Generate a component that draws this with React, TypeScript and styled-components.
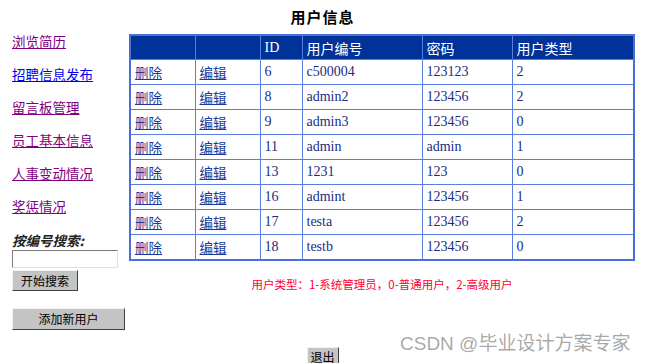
import React from "react";
import styled, { createGlobalStyle } from "styled-components";

const GlobalStyle = createGlobalStyle`
	html, body {
		margin: 0;
		padding: 0;
		background: #ffffff;
	}
	body {
		font-family: "Liberation Serif", "Noto Sans CJK SC", serif;
		color: #000000;
	}
`;

interface UserRow {
	id: number;
	code: string;
	password: string;
	type: number;
}

const users: UserRow[] = [
	{ id: 6, code: "c500004", password: "123123", type: 2 },
	{ id: 8, code: "admin2", password: "123456", type: 2 },
	{ id: 9, code: "admin3", password: "123456", type: 0 },
	{ id: 11, code: "admin", password: "admin", type: 1 },
	{ id: 13, code: "1231", password: "123", type: 0 },
	{ id: 16, code: "admint", password: "123456", type: 1 },
	{ id: 17, code: "testa", password: "123456", type: 2 },
	{ id: 18, code: "testb", password: "123456", type: 0 },
];

const navLinks = [
	{ label: "浏览简历", visited: true },
	{ label: "招聘信息发布", visited: false },
	{ label: "留言板管理", visited: true },
	{ label: "员工基本信息", visited: true },
	{ label: "人事变动情况", visited: true },
	{ label: "奖惩情况", visited: true },
];

export default function App() {
	return (
		<Page>
			<GlobalStyle />
			<Title>用户信息</Title>

			<Columns>
				<Sidebar>
					<NavList>
						{navLinks.map((link) => (
							<li key={link.label}>
								<NavLink href="#" $visited={link.visited}>
									{link.label}
								</NavLink>
							</li>
						))}
					</NavList>

					<SearchLabel>按编号搜索:</SearchLabel>
					<SearchInput type="text" />
					<GreyButton $width={66}>开始搜索</GreyButton>
					<AddButton $width={113}>添加新用户</AddButton>
				</Sidebar>

				<Main>
					<UserTable>
						<colgroup>
							<col style={{ width: 65 }} />
							<col style={{ width: 65 }} />
							<col style={{ width: 42 }} />
							<col style={{ width: 120 }} />
							<col style={{ width: 90 }} />
							<col style={{ width: 122 }} />
						</colgroup>
						<thead>
							<tr>
								<Th></Th>
								<Th></Th>
								<Th>ID</Th>
								<Th>用户编号</Th>
								<Th>密码</Th>
								<Th>用户类型</Th>
							</tr>
						</thead>
						<tbody>
							{users.map((u) => (
								<tr key={u.id}>
									<Td>
										<CellLink href="#">删除</CellLink>
									</Td>
									<Td>
										<CellLink href="#">编辑</CellLink>
									</Td>
									<Td>{u.id}</Td>
									<Td>{u.code}</Td>
									<Td>{u.password}</Td>
									<Td>{u.type}</Td>
								</tr>
							))}
						</tbody>
					</UserTable>

					<Note>用户类型：1-系统管理员，0-普通用户，2-高级用户</Note>
				</Main>
			</Columns>

			<Footer>
				<GreyButton $width={32}>退出</GreyButton>
			</Footer>

			<Watermark>CSDN @毕业设计方案专家</Watermark>
		</Page>
	);
}

const Page = styled.div`
	position: relative;
	width: 645px;
	height: 363px;
	overflow: hidden;
	padding-left: 12px;
	box-sizing: border-box;
`;

const Title = styled.h1`
	margin: 0 0 0 -12px;
	padding-top: 8px;
	line-height: 18px;
	height: 18px;
	text-align: center;
	font-family: "Noto Sans CJK SC", sans-serif;
	font-size: 15px;
	font-weight: bold;
	letter-spacing: 1px;
`;

const Columns = styled.div`
	display: flex;
	align-items: flex-start;
`;

const Sidebar = styled.aside`
	width: 117px;
	display: flex;
	flex-direction: column;
	align-items: flex-start;
`;

const NavList = styled.ul`
	list-style: none;
	margin: -1px 0 0;
	padding: 0;

	li {
		height: 33px;
		line-height: 33px;
	}
`;

const NavLink = styled.a<{ $visited: boolean }>`
	font-family: "Noto Sans CJK SC", sans-serif;
	font-size: 13.5px;
	color: ${(p) => (p.$visited ? "#800080" : "#0000ee")};
	text-decoration: underline;
`;

const SearchLabel = styled.div`
	margin-top: 7px;
	line-height: 20px;
	font-family: "Noto Sans CJK SC", sans-serif;
	font-size: 13.5px;
	font-weight: bold;
	font-style: italic;
	color: #222222;
`;

const SearchInput = styled.input`
	box-sizing: border-box;
	width: 106px;
	height: 18px;
	margin: 0;
	padding: 0 2px;
	border: 1px solid #7a7a7a;
	border-right-color: #e0e0e0;
	border-bottom-color: #e0e0e0;
	background: #ffffff;
`;

const GreyButton = styled.button<{ $width: number }>`
	box-sizing: border-box;
	width: ${(p) => p.$width}px;
	height: 21px;
	margin-top: 2px;
	padding: 0;
	background: #c4c4c4;
	border: 1px solid;
	border-color: #f2f2f2 #404040 #404040 #f2f2f2;
	font-family: "Noto Sans CJK SC", sans-serif;
	font-size: 12px;
	line-height: 18px;
	color: #000000;
`;

const AddButton = styled(GreyButton)`
	margin-top: 17px;
	height: 22px;
`;

const Main = styled.main`
	padding-top: 8px;
	display: flex;
	flex-direction: column;
	align-items: center;
`;

const UserTable = styled.table`
	width: 504px;
	table-layout: fixed;
	border-collapse: collapse;
	border: 2px solid #4a6fd8;
`;

const Th = styled.th`
	height: 23px;
	padding: 0 4px;
	background: #003399;
	border: 1px solid #5a7ee0;
	color: #ffffff;
	text-align: left;
	font-family: "Liberation Serif", "Noto Sans CJK SC", serif;
	font-size: 14px;
	font-weight: normal;
`;

const Td = styled.td`
	height: 24px;
	padding: 0 4px;
	border: 1px solid #5a7ee0;
	color: #1a2c80;
	font-family: "Liberation Serif", "Noto Sans CJK SC", serif;
	font-size: 14px;
	white-space: nowrap;
`;

const CellLink = styled.a`
	font-family: "Noto Sans CJK SC", sans-serif;
	font-size: 13.5px;
	color: #1a3a99;
	text-decoration: underline;
`;

const Note = styled.p`
	margin: 15px 0 0;
	line-height: 16px;
	font-family: "Noto Sans CJK SC", sans-serif;
	font-size: 11.5px;
	color: #ff0033;
`;

const Footer = styled.div`
	display: flex;
	justify-content: center;
	margin-top: 15px;
	margin-left: -12px;

	button {
		height: 20px;
	}
`;

const Watermark = styled.div`
	position: absolute;
	left: 400px;
	top: 332px;
	font-family: "Liberation Sans", "Noto Sans CJK SC", sans-serif;
	font-size: 19px;
	line-height: 24px;
	color: rgba(140, 140, 140, 0.75);
	white-space: nowrap;
	pointer-events: none;
`;
